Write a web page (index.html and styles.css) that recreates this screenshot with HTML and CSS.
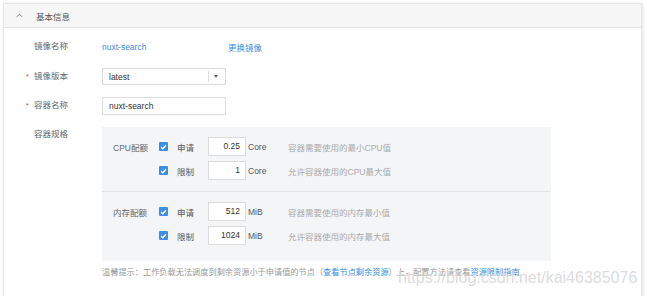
FILE: index.html
```
<!DOCTYPE html>
<html lang="zh-CN">
<head>
<meta charset="utf-8">
<title>基本信息</title>
<link rel="stylesheet" href="styles.css">
</head>
<body>
<div class="card">
  <div class="card-head">
    <svg class="chev" width="7" height="5" viewBox="0 0 7 5"><path d="M0.5 4.2 L3.5 1.2 L6.5 4.2" fill="none" stroke="#8a8a8a" stroke-width="1"/></svg>
    <span class="head-title">基本信息</span>
  </div>
  <div class="card-body">
    <div class="row r1">
      <div class="label">镜像名称</div>
      <div class="value">
        <span class="link name">nuxt-search</span>
        <span class="link">更换镜像</span>
      </div>
    </div>
    <div class="row r2">
      <div class="label"><i class="req">*</i>镜像版本</div>
      <div class="select">
        <span class="sel-text">latest</span>
        <span class="sep"></span>
        <span class="caret"></span>
      </div>
    </div>
    <div class="row r3">
      <div class="label"><i class="req">*</i>容器名称</div>
      <div class="input">nuxt-search</div>
    </div>
    <div class="row r4">
      <div class="label top">容器规格</div>
      <div class="spec">
        <div class="panel">
          <div class="section cpu">
            <div class="srow">
              <div class="slabel">CPU配额</div>
              <div class="check"><span class="box"><svg width="7" height="6" viewBox="0 0 7 6"><path d="M1 3 L2.8 4.7 L6 1.2" fill="none" stroke="#fff" stroke-width="1.4"/></svg></span>申请</div>
              <div class="num">0.25</div>
              <div class="unit">Core</div>
              <div class="hint">容器需要使用的最小CPU值</div>
            </div>
            <div class="srow">
              <div class="slabel"></div>
              <div class="check"><span class="box"><svg width="7" height="6" viewBox="0 0 7 6"><path d="M1 3 L2.8 4.7 L6 1.2" fill="none" stroke="#fff" stroke-width="1.4"/></svg></span>限制</div>
              <div class="num">1</div>
              <div class="unit">Core</div>
              <div class="hint">允许容器使用的CPU最大值</div>
            </div>
          </div>
          <div class="section mem">
            <div class="srow">
              <div class="slabel">内存配额</div>
              <div class="check"><span class="box"><svg width="7" height="6" viewBox="0 0 7 6"><path d="M1 3 L2.8 4.7 L6 1.2" fill="none" stroke="#fff" stroke-width="1.4"/></svg></span>申请</div>
              <div class="num">512</div>
              <div class="unit">MiB</div>
              <div class="hint">容器需要使用的内存最小值</div>
            </div>
            <div class="srow">
              <div class="slabel"></div>
              <div class="check"><span class="box"><svg width="7" height="6" viewBox="0 0 7 6"><path d="M1 3 L2.8 4.7 L6 1.2" fill="none" stroke="#fff" stroke-width="1.4"/></svg></span>限制</div>
              <div class="num">1024</div>
              <div class="unit">MiB</div>
              <div class="hint">允许容器使用的内存最大值</div>
            </div>
          </div>
        </div>
        <p class="tip">温馨提示：工作负载无法调度到剩余资源小于申请值的节点（<span class="link">查看节点剩余资源</span>）上，配置方法请查看<span class="link">资源限制指南</span></p>
      </div>
    </div>
  </div>
</div>
<div class="watermark">https://blog.csdn.net/kai46385076</div>
</body>
</html>
```
FILE: styles.css
```
* { box-sizing: border-box; }
html, body {
  margin: 0;
  padding: 0;
  background: #fff;
}
body {
  font-family: "Liberation Sans", "Noto Sans CJK SC", sans-serif;
  font-size: 8.5px;
  color: #666;
  width: 647px;
  height: 296px;
  overflow: hidden;
  position: relative;
}
.card {
  margin: 3px 5px 0 3px;
  width: 639px;
  height: 300px;
  border: 1px solid #e6e6e6;
  box-shadow: 1px 1px 3px rgba(0,0,0,0.12);
  background: #fff;
}
.card-head {
  height: 24px;
  background: #f7f7f7;
  border-bottom: 1px solid #e4e4e4;
  display: flex;
  align-items: center;
  padding-left: 12px;
}
.chev { display: block; margin-right: 13px; }
.head-title { color: #555; }
.card-body {
  padding: 10px 0 0 16px;
}
.row {
  display: flex;
  align-items: center;
}
.r1 { height: 17px; margin-bottom: 13px; }
.r2 { height: 17px; margin-bottom: 12px; }
.r3 { height: 17px; margin-bottom: 13px; }
.r4 { align-items: flex-start; }
.label {
  width: 48px;
  margin-right: 34px;
  text-align: right;
  line-height: 17px;
  color: #666;
  white-space: nowrap;
}
.label.top { line-height: 14px; }
.req {
  font-style: normal;
  color: #e9514a;
  margin-right: 5px;
  font-size: 8px;
}
.value { display: flex; align-items: center; }
.link { color: #3b8de0; }
.name { width: 126px; }
.select {
  width: 124px;
  height: 17px;
  border: 1px solid #dcdcdc;
  display: flex;
  align-items: center;
  padding-left: 6px;
  color: #333;
}
.sel-text { flex: 1; }
.sep {
  width: 1px;
  height: 11px;
  background: #dcdcdc;
  margin-right: 5px;
}
.caret {
  width: 0;
  height: 0;
  border-left: 2.5px solid transparent;
  border-right: 2.5px solid transparent;
  border-top: 3px solid #666;
  margin-right: 7px;
}
.input {
  width: 124px;
  height: 18px;
  border: 1px solid #dcdcdc;
  padding-left: 6px;
  line-height: 16px;
  color: #333;
}
.spec { width: 449px; }
.panel {
  background: #f4f5f7;
}
.section { padding-left: 11px; }
.section.cpu {
  padding-top: 10px;
  padding-bottom: 11px;
  border-bottom: 1px solid #e1e2e4;
}
.section.mem {
  padding-top: 10px;
  padding-bottom: 16px;
}
.srow {
  display: flex;
  align-items: center;
  height: 19px;
}
.srow + .srow { margin-top: 5px; }
.slabel {
  width: 34px;
  text-align: right;
  color: #666;
  white-space: nowrap;
}
.check {
  width: 49px;
  margin-left: 12px;
  display: flex;
  align-items: center;
  color: #555;
}
.box {
  width: 9px;
  height: 9px;
  border-radius: 1px;
  background: #3b8de6;
  display: flex;
  align-items: center;
  justify-content: center;
  margin-right: 9px;
}
.box svg { display: block; }
.num {
  width: 38px;
  height: 19px;
  background: #fff;
  border: 1px solid #dcdcdc;
  text-align: right;
  padding-right: 5px;
  line-height: 17px;
  color: #333;
}
.unit {
  width: 42px;
  padding-left: 2px;
  color: #555;
}
.hint { color: #aaa; white-space: nowrap; }
.tip {
  margin: 5px 0 0;
  line-height: 14px;
  font-size: 8.2px;
  color: #999;
  white-space: nowrap;
}
.watermark {
  position: absolute;
  left: 398px;
  top: 270px;
  font-family: "Liberation Sans", sans-serif;
  font-size: 16px;
  line-height: 16px;
  color: rgba(190,190,190,0.55);
  text-shadow: 0 0 1px rgba(255,255,255,0.8);
  white-space: nowrap;
}
```
